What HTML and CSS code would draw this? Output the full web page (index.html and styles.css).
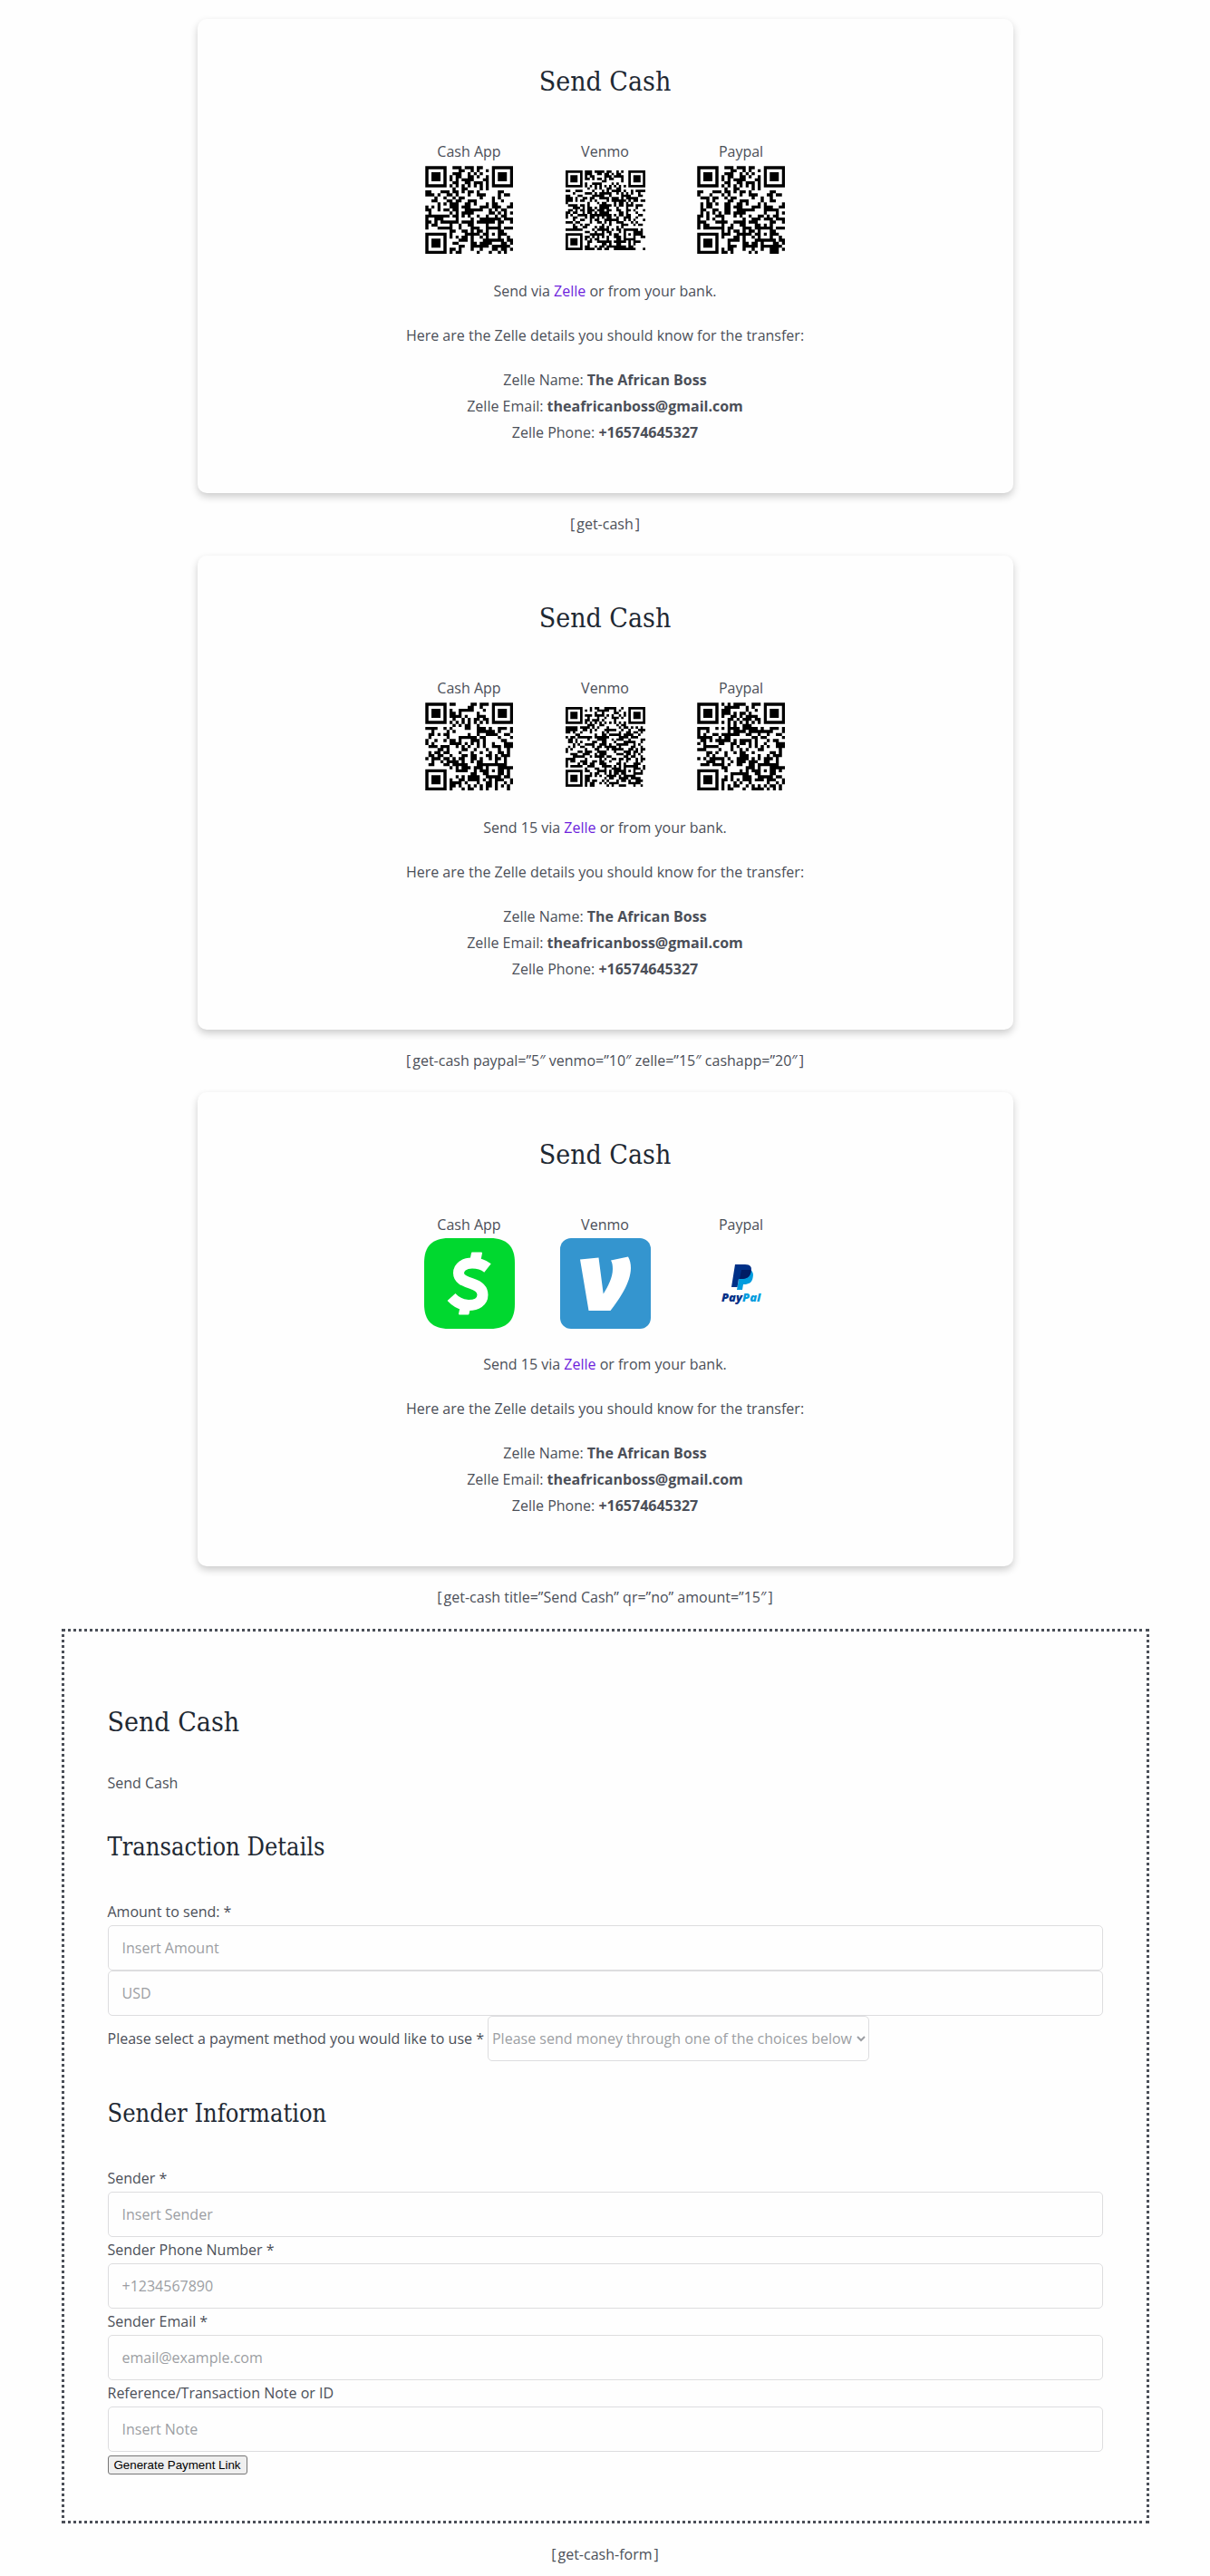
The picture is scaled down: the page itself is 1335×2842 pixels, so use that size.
FILE: index.html
```html
<!DOCTYPE html>
<html lang="en">
<head>
<meta charset="utf-8">
<meta name="viewport" content="width=device-width, initial-scale=1">
<title>Send Cash</title>
<link rel="stylesheet" href="styles.css">
</head>
<body>
<main class="page">
  <section class="card">
    <h2 class="title">Send Cash</h2>
    <div class="methods">
      <div class="method"><span>Cash App</span><canvas class="pic" width="150" height="150" role="img" aria-label="Cash App QR code" data-qr="https://cash.app/$theafricanboss/"></canvas></div>
      <div class="method"><span>Venmo</span><canvas class="pic" width="150" height="150" role="img" aria-label="Venmo QR code" data-qr="https://venmo.com/theafricanboss?txn=pay&amp;amount=&amp;note=Thank you"></canvas></div>
      <div class="method"><span>Paypal</span><canvas class="pic" width="150" height="150" role="img" aria-label="Paypal QR code" data-qr="https://paypal.me/theafricanboss/"></canvas></div>
    </div>
    <p>Send via <a class="link" href="#zelle">Zelle</a> or from your bank.</p>
    <p>Here are the Zelle details you should know for the transfer:</p>
    <p>Zelle Name: <strong>The African Boss</strong><br>Zelle Email: <strong>theafricanboss@gmail.com</strong><br>Zelle Phone: <strong>+16574645327</strong></p>
  </section>
  <p class="caption">[<span class="code">get-cash</span>]</p>

  <section class="card">
    <h2 class="title">Send Cash</h2>
    <div class="methods">
      <div class="method"><span>Cash App</span><canvas class="pic" width="150" height="150" role="img" aria-label="Cash App QR code" data-qr="https://cash.app/$theafricanboss/20"></canvas></div>
      <div class="method"><span>Venmo</span><canvas class="pic" width="150" height="150" role="img" aria-label="Venmo QR code" data-qr="https://venmo.com/theafricanboss?txn=pay&amp;amount=10&amp;note=Thank you"></canvas></div>
      <div class="method"><span>Paypal</span><canvas class="pic" width="150" height="150" role="img" aria-label="Paypal QR code" data-qr="https://paypal.me/theafricanboss/5"></canvas></div>
    </div>
    <p>Send 15 via <a class="link" href="#zelle">Zelle</a> or from your bank.</p>
    <p>Here are the Zelle details you should know for the transfer:</p>
    <p>Zelle Name: <strong>The African Boss</strong><br>Zelle Email: <strong>theafricanboss@gmail.com</strong><br>Zelle Phone: <strong>+16574645327</strong></p>
  </section>
  <p class="caption">[<span class="code">get-cash paypal=”5″ venmo=”10″ zelle=”15″ cashapp=”20″</span>]</p>

  <section class="card">
    <h2 class="title">Send Cash</h2>
    <div class="methods">
      <div class="method"><span>Cash App</span>
        <svg class="pic" viewBox="0 0 100 100" role="img" aria-label="Cash App">
          <path fill="#00d82f" d="M27 0H73C91 0 100 9 100 27V73C100 91 91 100 73 100H27C9 100 0 91 0 73V27C0 9 9 0 27 0Z"/>
          <path fill="none" stroke="#fff" stroke-width="12" d="M70 33C65 29 59 27.500 53 27.500C44 27.500 38 32 38 38.500C38 45 44 47.500 52 50C60 52.500 64.500 56 64.500 62.500C64.500 70 58 74 49 74C41 74 35.500 71 30 65"/>
          <path fill="#fff" stroke="#fff" stroke-width="2" stroke-linejoin="round" d="M53 16.500L63 16.500L60.500 29L50.500 29ZM41.500 72L51 72L48.500 83.500L39 83.500Z"/>
        </svg>
      </div>
      <div class="method"><span>Venmo</span>
        <svg class="pic" viewBox="0 0 100 100" role="img" aria-label="Venmo">
          <rect width="100" height="100" rx="12" fill="#3495cf"/>
          <path fill="#fff" d="M22 23.500L42.500 21.500L47.700 61.500C53 53 58 43 58 34C58 30 57.500 27 56 24.500L75 20.500C77 24 78 28 78 33C78 49 65 68 55.500 80H31.500Z"/>
        </svg>
      </div>
      <div class="method"><span>Paypal</span>
        <svg class="pic" viewBox="0 0 100 100" role="img" aria-label="PayPal">
          <path fill="#009cde" d="M60 35C63 37 63.500 40 62.500 44C61.500 49 58 51 53 51H52L51 57H45L48 40Z"/>
          <path fill="#003087" d="M43 29H54C60 29 62 32 60.500 37C59.500 43 56 45 50 45H47L45.500 54H39Z"/>
          <path fill="#001c64" d="M50 35H60.500C61 41 57 45 50 45H48Z"/>
          <text class="wordmark" x="28" y="70"><tspan fill="#003087">Pay</tspan><tspan fill="#009cde">Pal</tspan></text>
        </svg>
      </div>
    </div>
    <p>Send 15 via <a class="link" href="#zelle">Zelle</a> or from your bank.</p>
    <p>Here are the Zelle details you should know for the transfer:</p>
    <p>Zelle Name: <strong>The African Boss</strong><br>Zelle Email: <strong>theafricanboss@gmail.com</strong><br>Zelle Phone: <strong>+16574645327</strong></p>
  </section>
  <p class="caption">[<span class="code">get-cash title=”Send Cash” qr=”no” amount=”15″</span>]</p>

  <form class="cash-form">
    <h2 class="title">Send Cash</h2>
    <p class="intro">Send Cash</p>
    <h3 class="subtitle">Transaction Details</h3>
    <label class="label" for="amount">Amount to send: *</label>
    <input class="field" id="amount" type="text" placeholder="Insert Amount">
    <input class="field" id="currency" type="text" placeholder="USD" aria-label="Currency">
    <div class="select-row">
      <label for="method">Please select a payment method you would like to use *</label>
      <select class="select" id="method">
        <option>Please send money through one of the choices below</option>
        <option>Cash App</option>
        <option>Venmo</option>
        <option>Paypal</option>
        <option>Zelle</option>
      </select>
    </div>
    <h3 class="subtitle">Sender Information</h3>
    <label class="label" for="sender">Sender *</label>
    <input class="field" id="sender" type="text" placeholder="Insert Sender">
    <label class="label" for="phone">Sender Phone Number *</label>
    <input class="field" id="phone" type="tel" placeholder="+1234567890">
    <label class="label" for="email">Sender Email *</label>
    <input class="field" id="email" type="email" placeholder="email@example.com">
    <label class="label" for="note">Reference/Transaction Note or ID</label>
    <input class="field" id="note" type="text" placeholder="Insert Note">
    <button class="submit" type="button">Generate Payment Link</button>
  </form>
  <p class="caption">[<span class="code">get-cash-form</span>]</p>
</main>
<script src="qr.js"></script>
</body>
</html>
```
FILE: styles.css
```css
* {
  box-sizing: border-box;
}

body {
  margin: 0;
  background: #fefefe;
  color: #4b4f58;
  font: 16px/29px "Open Sans", sans-serif;
}

p {
  margin: 0;
}

.page {
  display: flex;
  flex-direction: column;
  align-items: center;
  gap: 20px;
  padding: 21px 24px 11px;
}

.card {
  width: 100%;
  max-width: 900px;
  padding: 48px 48px 52px;
  border-radius: 10px;
  box-shadow: 0 4px 8px 0 rgba(0, 0, 0, 0.2);
  text-align: center;
}

.title,
.subtitle {
  margin: 0;
  color: #1f2933;
  font-family: "DejaVu Serif Condensed", "DejaVu Serif", serif;
  font-weight: 400;
}

.title {
  font-size: 30px;
  line-height: 42px;
}

.card .title {
  margin-bottom: 42px;
}

.methods {
  display: flex;
  justify-content: center;
  gap: 50px;
  margin-bottom: 25px;
}

.method {
  display: flex;
  flex-direction: column;
  align-items: center;
  width: 100px;
}

.pic {
  display: block;
  width: 100px;
  height: 100px;
}

.wordmark {
  font: italic 800 13px "Open Sans", sans-serif;
}

.card p + p {
  margin-top: 20px;
}

.link {
  color: #6d1fdc;
  text-decoration: none;
}

.caption {
  text-align: center;
}

.code {
  margin: 0 2px;
}

.cash-form {
  width: 100%;
  max-width: 1200px;
  padding: 79px 48px 51px;
  border: 3px dotted #4b4f58;
}

.intro {
  margin-top: 32px;
}

.subtitle {
  margin: 37px 0 38px;
  font-size: 27px;
  line-height: 38px;
}

.label {
  display: block;
}

.field {
  display: block;
  width: 100%;
  height: 50px;
  padding: 0 15px;
}

.field,
.select {
  border: 1px solid #dddddf;
  border-radius: 5px;
  background: #fefefe;
  color: #9c9ea3;
  font: 16px "Open Sans", sans-serif;
}

.field::placeholder {
  color: #9c9ea3;
  opacity: 1;
}

.select-row {
  display: flex;
  flex-wrap: wrap;
  align-items: baseline;
  column-gap: 4px;
  min-height: 52px;
}

.select {
  height: 50px;
  padding: 0 1px 0 0;
}

.submit {
  display: block;
  margin-top: 4px;
  padding: 1px 6px;
  border: 1px solid #767676;
  border-radius: 3px;
  background: #efefef;
  color: #000;
  font-family: "Liberation Sans", Arial, sans-serif;
  line-height: 17px;
}
```
FILE: qr.js
```js
// Byte-mode QR encoder, error correction level L, single-block versions 3 and 4.
var VERSIONS = [
  { n: 29, data: 55, ec: 15, align: 22 },
  { n: 33, data: 80, ec: 20, align: 26 }
];

function gmul(a, b) {
  var r = 0;
  while (b) {
    if (b & 1) r ^= a;
    a <<= 1;
    if (a & 256) a ^= 0x11d;
    b >>= 1;
  }
  return r;
}

function errorCodes(data, count) {
  var gen = [1], root = 1, i, j;
  for (i = 0; i < count; i++) {
    var next = gen.concat([0]);
    for (j = 0; j < gen.length; j++) next[j + 1] ^= gmul(gen[j], root);
    gen = next;
    root = gmul(root, 2);
  }
  var rem = data.concat(new Array(count).fill(0));
  for (i = 0; i < data.length; i++) {
    var c = rem[i];
    for (j = 0; j <= count; j++) rem[i + j] ^= gmul(gen[j], c);
  }
  return rem.slice(data.length);
}

var MASKS = [
  function (r, c) { return (r + c) % 2 === 0; },
  function (r, c) { return r % 2 === 0; },
  function (r, c) { return c % 3 === 0; },
  function (r, c) { return (r + c) % 3 === 0; },
  function (r, c) { return (Math.floor(r / 2) + Math.floor(c / 3)) % 2 === 0; },
  function (r, c) { return (r * c) % 2 + (r * c) % 3 === 0; },
  function (r, c) { return ((r * c) % 2 + (r * c) % 3) % 2 === 0; },
  function (r, c) { return ((r + c) % 2 + (r * c) % 3) % 2 === 0; }
];

function build(version, codewords, mask) {
  var n = version.n, m = [], fixed = [], r, c, i;
  for (r = 0; r < n; r++) {
    m.push(new Array(n).fill(0));
    fixed.push(new Array(n).fill(0));
  }
  function set(row, col, v) {
    if (row < 0 || col < 0 || row >= n || col >= n) return;
    m[row][col] = v ? 1 : 0;
    fixed[row][col] = 1;
  }
  for (i = 0; i < n; i++) {
    set(6, i, i % 2 === 0);
    set(i, 6, i % 2 === 0);
  }
  [[3, 3], [3, n - 4], [n - 4, 3]].forEach(function (p) {
    for (r = -4; r <= 4; r++) for (c = -4; c <= 4; c++) {
      var d = Math.max(Math.abs(r), Math.abs(c));
      set(p[0] + r, p[1] + c, d !== 2 && d !== 4);
    }
  });
  for (r = -2; r <= 2; r++) for (c = -2; c <= 2; c++) {
    set(version.align + r, version.align + c, Math.max(Math.abs(r), Math.abs(c)) !== 1);
  }
  var fmt = (1 << 3) | mask, rem = fmt;
  for (i = 0; i < 10; i++) rem = (rem << 1) ^ ((rem >> 9) * 0x537);
  var bits = ((fmt << 10) | rem) ^ 0x5412;
  function bit(k) { return (bits >> k) & 1; }
  for (i = 0; i <= 5; i++) set(i, 8, bit(i));
  set(7, 8, bit(6));
  set(8, 8, bit(7));
  set(8, 7, bit(8));
  for (i = 9; i < 15; i++) set(8, 14 - i, bit(i));
  for (i = 0; i < 8; i++) set(8, n - 1 - i, bit(i));
  for (i = 8; i < 15; i++) set(n - 15 + i, 8, bit(i));
  set(n - 8, 8, 1);

  var k = 0;
  for (var right = n - 1; right >= 1; right -= 2) {
    if (right === 6) right = 5;
    for (var v = 0; v < n; v++) for (var j = 0; j < 2; j++) {
      c = right - j;
      r = ((right + 1) & 2) === 0 ? n - 1 - v : v;
      if (fixed[r][c]) continue;
      var on = k < codewords.length * 8 ? (codewords[k >> 3] >> (7 - (k & 7))) & 1 : 0;
      k++;
      m[r][c] = on ^ (MASKS[mask](r, c) ? 1 : 0);
    }
  }
  return m;
}

function penalty(m) {
  var n = m.length, score = 0, dark = 0;
  function scan(get) {
    for (var a = 0; a < n; a++) {
      var run = 0, prev = -1, line = "";
      for (var b = 0; b < n; b++) {
        var v = get(a, b);
        line += v;
        if (v === prev) {
          run++;
          if (run === 5) score += 3;
          else if (run > 5) score++;
        } else {
          prev = v;
          run = 1;
        }
      }
      for (b = 0; b + 7 <= n; b++) {
        if (line.substr(b, 7) !== "1011101") continue;
        var before = line.slice(Math.max(0, b - 4), b), after = line.substr(b + 7, 4);
        if (before.indexOf("1") < 0 || after.indexOf("1") < 0) score += 40;
      }
    }
  }
  scan(function (a, b) { return m[a][b]; });
  scan(function (a, b) { return m[b][a]; });
  for (var r = 0; r < n; r++) for (var c = 0; c < n; c++) {
    dark += m[r][c];
    if (r && c && m[r][c] === m[r - 1][c] && m[r][c] === m[r][c - 1] && m[r][c] === m[r - 1][c - 1]) score += 3;
  }
  return score + Math.floor(Math.abs(dark * 20 - n * n * 10) / (n * n)) * 10;
}

function encode(text) {
  var bytes = Array.from(new TextEncoder().encode(text));
  var version = VERSIONS.find(function (v) { return bytes.length <= v.data - 2; });
  var nibbles = [4, bytes.length >> 4, bytes.length & 15];
  bytes.forEach(function (b) { nibbles.push(b >> 4, b & 15); });
  nibbles.push(0);
  var data = [];
  for (var i = 0; i < nibbles.length; i += 2) data.push((nibbles[i] << 4) | nibbles[i + 1]);
  for (i = 0; data.length < version.data; i++) data.push(i % 2 ? 17 : 236);
  var codewords = data.concat(errorCodes(data, version.ec)), best = null, low = Infinity;
  for (var mask = 0; mask < 8; mask++) {
    var m = build(version, codewords, mask), p = penalty(m);
    if (p < low) {
      low = p;
      best = m;
    }
  }
  return best;
}

document.querySelectorAll("canvas[data-qr]").forEach(function (canvas) {
  var m = encode(canvas.dataset.qr), ctx = canvas.getContext("2d");
  var unit = Math.floor(canvas.width / m.length);
  var pad = Math.floor((canvas.width - unit * m.length) / 2);
  m.forEach(function (row, r) {
    row.forEach(function (on, c) {
      if (on) ctx.fillRect(pad + c * unit, pad + r * unit, unit, unit);
    });
  });
});
```
